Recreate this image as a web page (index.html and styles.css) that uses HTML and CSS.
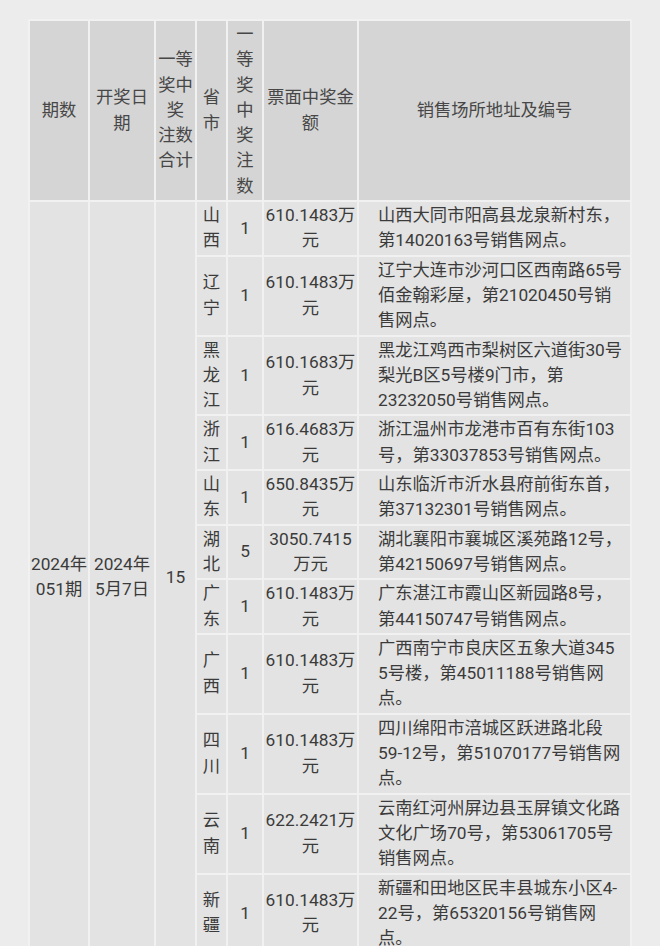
FILE: index.html
```html
<!DOCTYPE html>
<html lang="zh-CN">
<head>
<meta charset="utf-8">
<title>一等奖中奖情况</title>
<link rel="stylesheet" href="styles.css">
</head>
<body>
<table class="prize-table">
  <colgroup>
    <col class="c-issue">
    <col class="c-date">
    <col class="c-total">
    <col class="c-prov">
    <col class="c-count">
    <col class="c-amount">
    <col class="c-addr">
  </colgroup>
  <thead>
    <tr>
      <th>期数</th>
      <th>开奖日期</th>
      <th>一等奖中奖<br>注数合计</th>
      <th>省市</th>
      <th>一等奖中奖注数</th>
      <th>票面中奖金额</th>
      <th>销售场所地址及编号</th>
    </tr>
  </thead>
  <tbody>
    <tr>
      <td rowspan="11">2024年051期</td>
      <td rowspan="11">2024年5月7日</td>
      <td rowspan="11">15</td>
      <td>山西</td>
      <td>1</td>
      <td>610.1483万元</td>
      <td class="addr">山西大同市阳高县龙泉新村东，第14020163号销售网点。</td>
    </tr>
    <tr>
      <td>辽宁</td>
      <td>1</td>
      <td>610.1483万元</td>
      <td class="addr">辽宁大连市沙河口区西南路65号佰金翰彩屋，第21020450号销售网点。</td>
    </tr>
    <tr>
      <td>黑龙江</td>
      <td>1</td>
      <td>610.1683万元</td>
      <td class="addr">黑龙江鸡西市梨树区六道街30号梨光B区5号楼9门市，第23232050号销售网点。</td>
    </tr>
    <tr>
      <td>浙江</td>
      <td>1</td>
      <td>616.4683万元</td>
      <td class="addr">浙江温州市龙港市百有东街103号，第33037853号销售网点。</td>
    </tr>
    <tr>
      <td>山东</td>
      <td>1</td>
      <td>650.8435万元</td>
      <td class="addr">山东临沂市沂水县府前街东首，第37132301号销售网点。</td>
    </tr>
    <tr>
      <td>湖北</td>
      <td>5</td>
      <td>3050.7415万元</td>
      <td class="addr">湖北襄阳市襄城区溪苑路12号，第42150697号销售网点。</td>
    </tr>
    <tr>
      <td>广东</td>
      <td>1</td>
      <td>610.1483万元</td>
      <td class="addr">广东湛江市霞山区新园路8号，第44150747号销售网点。</td>
    </tr>
    <tr>
      <td>广西</td>
      <td>1</td>
      <td>610.1483万元</td>
      <td class="addr">广西南宁市良庆区五象大道345<wbr>5号楼，第45011188号销售网点。</td>
    </tr>
    <tr>
      <td>四川</td>
      <td>1</td>
      <td>610.1483万元</td>
      <td class="addr">四川绵阳市涪城区跃进路北段59-12号，第51070177号销售网点。</td>
    </tr>
    <tr>
      <td>云南</td>
      <td>1</td>
      <td>622.2421万元</td>
      <td class="addr">云南红河州屏边县玉屏镇文化路文化广场70号，第53061705号销售网点。</td>
    </tr>
    <tr>
      <td>新疆</td>
      <td>1</td>
      <td>610.1483万元</td>
      <td class="addr">新疆和田地区民丰县城东小区4-<wbr>22号，第65320156号销售网点。</td>
    </tr>
  </tbody>
</table>
</body>
</html>
```
FILE: styles.css
```css
html, body {
  margin: 0;
  padding: 0;
  background: #ececec;
}

body {
  font-family: Roboto, "Noto Sans CJK SC", sans-serif;
  font-size: 17.3px;
  line-height: 25.3px;
  color: #3b3b3b;
}

.prize-table {
  margin: 19px 0 0 28px;
  width: 604px;
  table-layout: fixed;
  border-collapse: separate;
  border-spacing: 2px;
  background: #f1f1f1;
}

.c-issue { width: 58px; }
.c-date { width: 64px; }
.c-total { width: 39px; }
.c-prov { width: 29px; }
.c-count { width: 34px; }
.c-amount { width: 93px; }
.c-addr { width: 271px; }

.prize-table th,
.prize-table td {
  box-sizing: border-box;
  padding: 1px 0;
  text-align: center;
  vertical-align: middle;
  font-weight: normal;
}

.prize-table th {
  background: #d5d5d5;
  color: #474747;
}

.prize-table td {
  background: #e3e3e3;
}

.prize-table td.addr {
  text-align: left;
  padding: 1px 7px 1px 19px;
}
```
